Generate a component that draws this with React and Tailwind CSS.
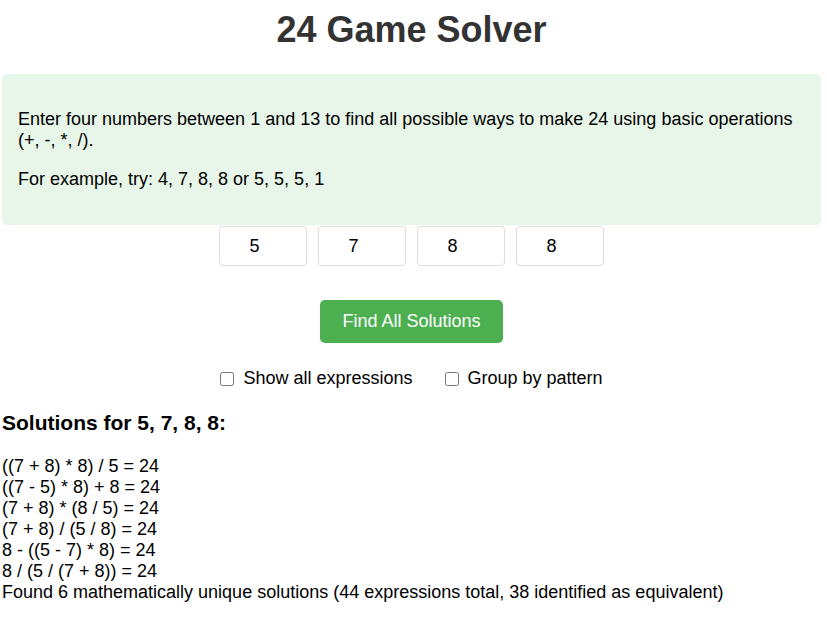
import React from 'react';

const solutions = [
  '((7 + 8) * 8) / 5 = 24',
  '((7 - 5) * 8) + 8 = 24',
  '(7 + 8) * (8 / 5) = 24',
  '(7 + 8) / (5 / 8) = 24',
  '8 - ((5 - 7) * 8) = 24',
  '8 / (5 / (7 + 8)) = 24',
];

const App = () => {
  return (
    <div className="ml-[2px] w-[819px] font-['Liberation_Sans',Arial,sans-serif] text-[18px] leading-[normal] text-black">
      <h1 className="mt-[9px] text-center text-[36px] leading-[normal] font-bold text-[#333]">24 Game Solver</h1>

      <div className="mt-[23px] rounded-[5px] bg-[#e8f5e9] px-[16px] py-[17px]">
        <p className="my-[18px]">
          Enter four numbers between 1 and 13 to find all possible ways to make 24 using basic operations (+, -, *, /).
        </p>
        <p className="my-[18px]">For example, try: 4, 7, 8, 8 or 5, 5, 5, 1</p>
      </div>

      <div className="mt-[1px] flex justify-center gap-[11px]">
        {[5, 7, 8, 8].map((n, i) => (
          <input
            key={i}
            type="text"
            defaultValue={n}
            className="h-[40px] w-[88px] rounded-[4px] border border-[#ddd] bg-white pl-0 pr-[17px] text-center text-[18px]"
          />
        ))}
      </div>

      <div className="mt-[34px] flex justify-center">
        <button className="h-[43px] w-[183px] rounded-[5px] bg-[#4caf50] text-[18px] leading-[normal] text-white">
          Find All Solutions
        </button>
      </div>

      <div className="mt-[25px] flex justify-center gap-[32px]">
        <label className="flex items-center">
          <input type="checkbox" className="mr-[9px] h-[14px] w-[14px]" />
          Show all expressions
        </label>
        <label className="flex items-center">
          <input type="checkbox" className="mr-[9px] h-[14px] w-[14px]" />
          Group by pattern
        </label>
      </div>

      <h3 className="mt-[22px] text-[21px] leading-[normal] font-bold">Solutions for 5, 7, 8, 8:</h3>

      <div className="mt-[21px]">
        {solutions.map((s) => (
          <div key={s}>{s}</div>
        ))}
        <div>Found 6 mathematically unique solutions (44 expressions total, 38 identified as equivalent)</div>
      </div>
    </div>
  );
};

export default App;
